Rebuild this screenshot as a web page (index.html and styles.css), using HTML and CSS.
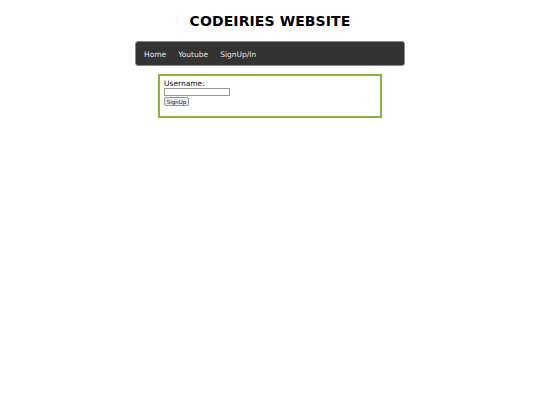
FILE: index.html
```html
<!DOCTYPE html>
<html>
<head>
<meta charset="utf-8">
<link rel="stylesheet" href="styles.css">
</head>
<body>
<h1 class="title">CODEIRIES WEBSITE</h1>
<nav class="nav">
  <a href="#" class="nav-link">Home</a>
  <a href="#" class="nav-link">Youtube</a>
  <a href="#" class="nav-link">SignUp/In</a>
</nav>
<div class="box">
  <form class="form">
    <label class="label" for="u">Username:</label>
    <input class="input" id="u" type="text">
    <button class="btn" type="button">SignUp</button>
  </form>
</div>
</body>
</html>
```

FILE: styles.css
```css
body {
  margin: 0;
  font-family: "DejaVu Sans", Verdana, sans-serif;
  background: #fff;
}
.title {
  margin: 12px 0 0;
  height: 22px;
  text-align: center;
  font-size: 14px;
  line-height: 18px;
  font-weight: bold;
  color: #000;
  letter-spacing: 0.1px;
}
.nav {
  box-sizing: border-box;
  width: 270px;
  height: 25px;
  margin: 7px auto 0;
  background: #333;
  border: 1px solid #888;
  border-radius: 3px;
  display: flex;
  align-items: center;
  gap: 12px;
  padding: 2px 0 0 8px;
}
.nav-link {
  color: #e6e6e6;
  text-decoration: none;
  font-size: 7.5px;
}
.box {
  box-sizing: border-box;
  width: 224px;
  height: 44px;
  margin: 8px auto 0;
  border: 2px solid #88b43c;
  padding: 3px 4px;
}
.form {
  display: flex;
  flex-direction: column;
  align-items: flex-start;
}
.label {
  font-size: 7.5px;
  line-height: 9px;
  color: #111;
}
.input {
  box-sizing: border-box;
  width: 66px;
  height: 8px;
  margin: 0;
  padding: 0;
  border: 1px solid #999;
}
.btn {
  box-sizing: border-box;
  width: 25px;
  height: 9px;
  margin: 1px 0 0;
  font-family: "DejaVu Sans", Verdana, sans-serif;
  font-size: 5.5px;
  line-height: 6px;
  padding: 0;
  border: 1px solid #999;
  border-radius: 2px;
  background: #eee;
  color: #111;
}
```
